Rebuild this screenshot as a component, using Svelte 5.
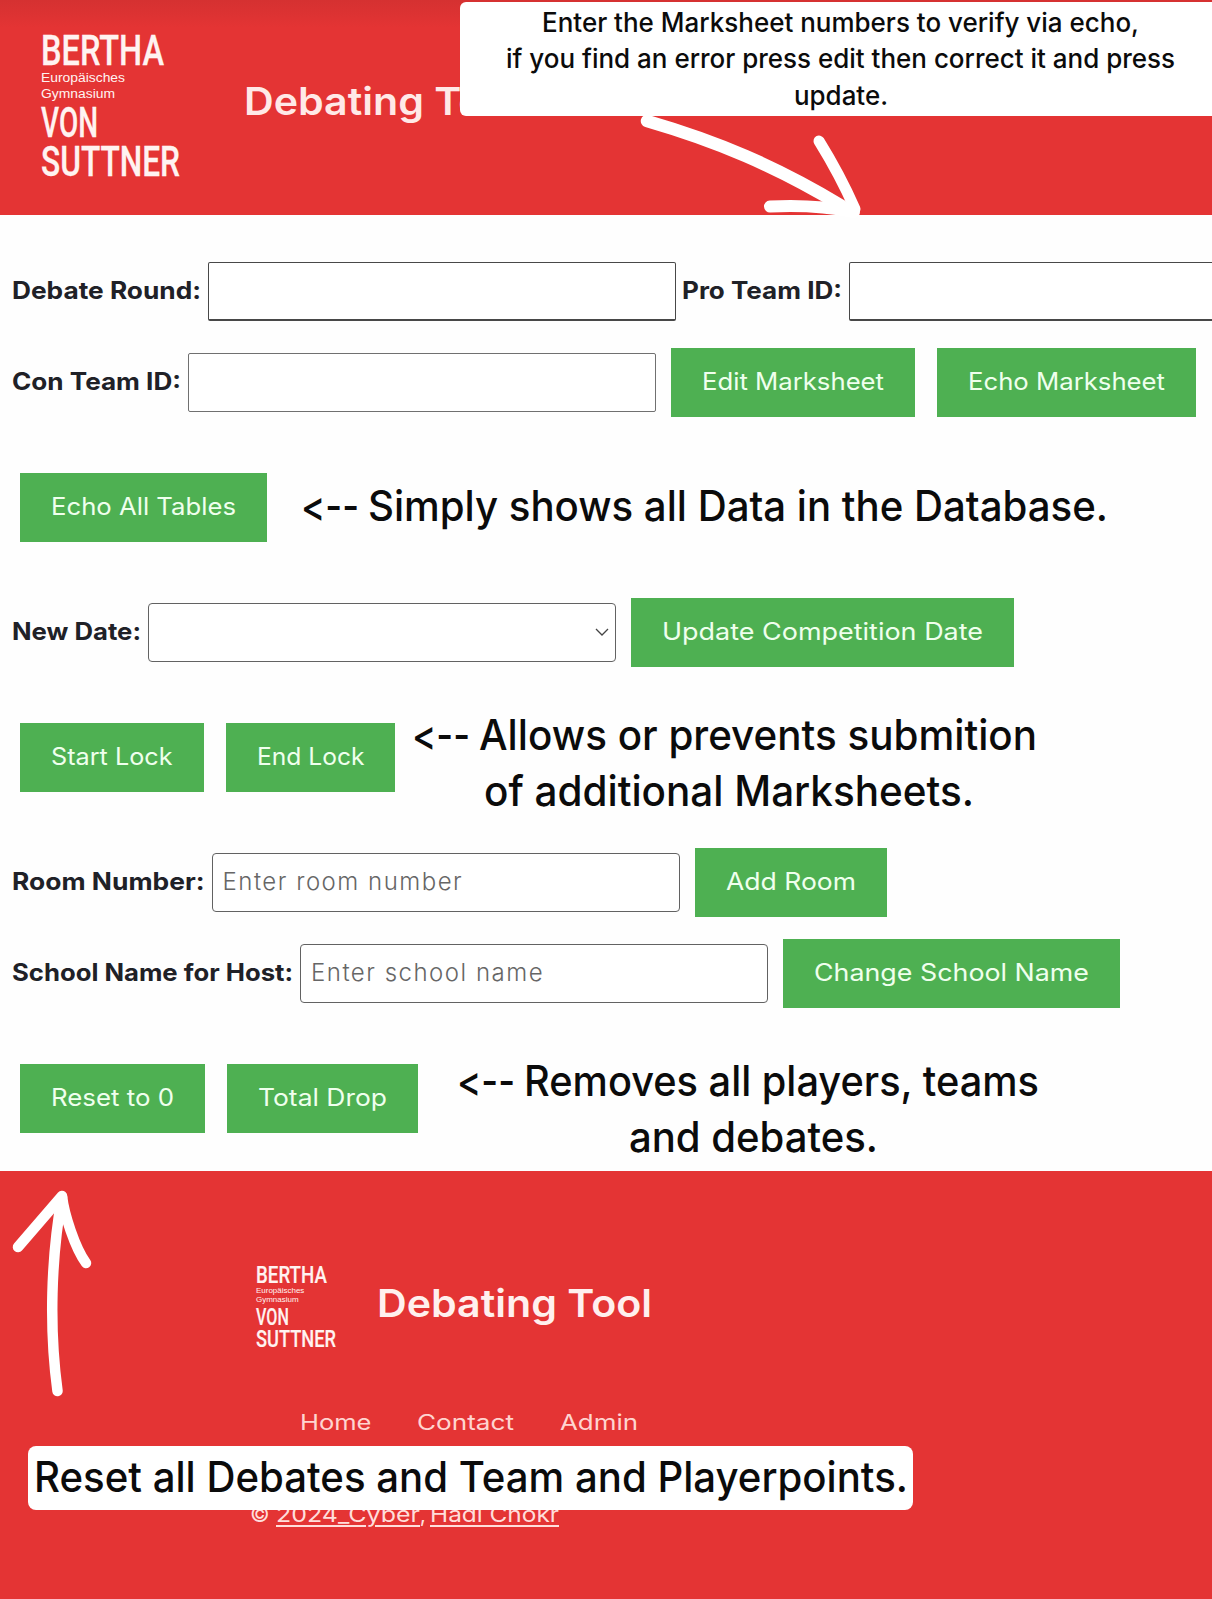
<script>
  // Stretches or condenses a line of text until it fills the given width.
  function fit(node, width) {
    const natural = node.getBoundingClientRect().width;
    node.style.transform = `scaleX(${width / natural})`;
    node.style.marginRight = `${width - natural}px`;
  }
</script>

{#snippet logo()}
  <svg class="logo" viewBox="0 0 140 144" role="img" aria-label="Bertha von Suttner">
    <g class="big">
      <text x="0" y="32" textLength="123" lengthAdjust="spacingAndGlyphs">BERTHA</text>
      <text x="0" y="104" textLength="57" lengthAdjust="spacingAndGlyphs">VON</text>
      <text x="0" y="143" textLength="139" lengthAdjust="spacingAndGlyphs">SUTTNER</text>
    </g>
    <g class="small">
      <text x="0" y="49" textLength="84" lengthAdjust="spacingAndGlyphs">Europäisches</text>
      <text x="0" y="64.5" textLength="74" lengthAdjust="spacingAndGlyphs">Gymnasium</text>
    </g>
  </svg>
{/snippet}

{#snippet button(text, width)}
  <button type="button"><span class="fit" use:fit={width}>{text}</span></button>
{/snippet}

{#snippet label(text, width, id)}
  <label for={id}><span class="fit" use:fit={width}>{text}</span></label>
{/snippet}

<div class="page">
  <header>
    {@render logo()}
    <h1><span class="fit" use:fit={275}>Debating Tool</span></h1>
  </header>

  <main>
    <div class="row first">
      {@render label('Debate Round:', 189, 'round')}
      <input id="round" class="square" />
      <span class="spacer"></span>
      {@render label('Pro Team ID:', 160, 'pro')}
      <input id="pro" class="square" />
    </div>
    <div class="row">
      {@render label('Con Team ID:', 169, 'con')}
      <input id="con" class="square light" />
      <div class="actions">
        {@render button('Edit Marksheet', 182)}
        {@render button('Echo Marksheet', 197)}
      </div>
    </div>
    <div class="row apart">
      <div class="actions start">{@render button('Echo All Tables', 185)}</div>
      <p class="note data">
        <span class="line"><span class="fit" use:fit={58}>&lt;--</span><span class="fit" use:fit={740}>Simply shows all Data in the Database.</span></span>
      </p>
    </div>
    <div class="row apart">
      {@render label('New Date:', 129, 'date')}
      <div class="select">
        <select id="date" aria-label="New Date"></select>
        <svg viewBox="0 0 14 8"><path d="M1 1l6 6 6-6" /></svg>
      </div>
      <div class="actions">{@render button('Update Competition Date', 321)}</div>
    </div>
    <div class="row apart">
      <div class="actions start">
        {@render button('Start Lock', 121.5)}
        {@render button('End Lock', 107.5)}
      </div>
      <p class="note lock">
        <span class="line"><span class="fit" use:fit={58}>&lt;--</span><span class="fit" use:fit={558}>Allows or prevents submition</span></span>
        <span class="line second"><span class="fit" use:fit={490}>of additional Marksheets.</span></span>
      </p>
    </div>
    <div class="row apart">
      {@render label('Room Number:', 192.5, 'room')}
      <input id="room" placeholder="Enter room number" />
      <div class="actions">{@render button('Add Room', 130)}</div>
    </div>
    <div class="row close">
      {@render label('School Name for Host:', 281, 'school')}
      <input id="school" placeholder="Enter school name" />
      <div class="actions">{@render button('Change School Name', 275)}</div>
    </div>
    <div class="row apart">
      <div class="actions start">
        {@render button('Reset to 0', 123)}
        {@render button('Total Drop', 129)}
      </div>
      <p class="note drop">
        <span class="line"><span class="fit" use:fit={58}>&lt;--</span><span class="fit" use:fit={515}>Removes all players, teams</span></span>
        <span class="line second"><span class="fit" use:fit={249}>and debates.</span></span>
      </p>
    </div>
  </main>

  <footer>
    <div class="brand">
      {@render logo()}
      <h2><span class="fit" use:fit={275}>Debating Tool</span></h2>
    </div>
    <nav>
      <a href="#home"><span class="fit" use:fit={71.5}>Home</span></a>
      <a href="#contact"><span class="fit" use:fit={97}>Contact</span></a>
      <a href="#admin"><span class="fit" use:fit={78}>Admin</span></a>
    </nav>
    <p class="copy">
      <span>©</span>
      <a href="#cyber"><span class="fit" use:fit={144}>2024_Cyber</span></a><span class="comma">,</span>
      <a href="#author"><span class="fit" use:fit={129}>Hadi Chokr</span></a>
    </p>
  </footer>

  <div class="callout top">
    <span class="fit" use:fit={597}>Enter the Marksheet numbers to verify via echo,</span>
    <span class="fit" use:fit={669}>if you find an error press edit then correct it and press</span>
    <span class="fit" use:fit={94}>update.</span>
  </div>
  <div class="callout bottom"><span class="fit" use:fit={874}>Reset all Debates and Team and Playerpoints.</span></div>

  <svg class="arrow down" viewBox="0 0 224 106">
    <path d="M11 11C80 31 140 56 206 96" stroke-width="12.5" />
    <path d="M183 31C196 52 208 74 219 99" stroke-width="11" />
    <path d="M134 96.500C162 95 188 96 218 102" stroke-width="12" />
  </svg>
  <svg class="arrow up" viewBox="0 0 84 210">
    <path d="M8 59L52 8C54 26 65 60 76 75" />
    <path d="M52 9C41 70 39 140 47.500 203" />
  </svg>
</div>

<style>
  :global(body) { margin: 0; background: #fefefe; }
  .page {
    position: relative;
    width: 1212px;
    height: 1599px;
    overflow: hidden;
    font-family: Inter, "Open Sans", sans-serif;
    font-size: 24px;
    color: #202127;
  }
  .fit { display: inline-block; white-space: pre; flex: none; transform-origin: left center; }
  h1, h2, p { margin: 0; }

  header {
    box-sizing: border-box;
    display: flex;
    align-items: flex-start;
    height: 215px;
    padding: 33px 0 0 41px;
    background: linear-gradient(#d53131, #e43434 28px);
  }
  .logo { display: block; flex: none; width: 140px; height: 144px; fill: #fff3f1; overflow: visible; }
  .logo .big { font: 500 43px Roboto, sans-serif; stroke: #fff3f1; stroke-width: 0.3; }
  .logo .small { font: 400 12.5px "Liberation Sans", sans-serif; }
  h1, h2 { font-weight: 600; font-size: 38.5px; line-height: 48px; color: #ffe9e7; }
  h1 { margin: 44px 0 0 62.5px; }

  main {
    box-sizing: border-box;
    height: 956px;
    padding-top: 41.7px;
  }
  .row { display: flex; align-items: center; height: 69px; margin-top: 22px; padding-left: 12px; }
  .row.first { margin-top: 0; }
  .row.apart { margin-top: 56px; }
  .row.close { margin-top: 21.9px; }
  label { flex: none; margin-right: 7px; line-height: 30px; font-weight: 700; }
  .spacer { flex: none; width: 6px; }

  input, select {
    box-sizing: border-box;
    flex: none;
    width: 468px;
    height: 59px;
    margin-top: 1px;
    padding: 0 10px 2px;
    border: 1px solid #626262;
    border-radius: 4px;
    background: #fff;
    font: 400 24px Inter, sans-serif;
    letter-spacing: 1.5px;
    appearance: none;
  }
  input.square { border-radius: 2px; border-color: #484848; border-bottom-width: 2px; }
  input.light { border-color: #707070; border-bottom-width: 1px; }
  input::placeholder { color: #666; opacity: 1; font-weight: 350; }
  .select { position: relative; flex: none; display: flex; }
  .select svg { position: absolute; right: 7px; top: 26px; width: 14px; height: 8px; fill: none; stroke: #444; stroke-width: 1.3; }

  .actions { display: flex; flex: none; gap: 22px; margin-left: 15px; }
  .actions.start { margin-left: 8px; }
  button {
    box-sizing: border-box;
    height: 69px;
    padding: 0 31px 1px;
    border: 0;
    background: #4eb052;
    color: #efffed;
    font: 400 24px Inter, sans-serif;
    white-space: nowrap;
  }

  .note {
    flex: none;
    font: 540 42px/56px Inter, sans-serif;
    /* keeps "<--" as three separate characters */
    font-feature-settings: "calt" 0, "liga" 0;
    color: #0b0b0b;
  }
  .line { display: flex; justify-content: center; gap: 9px; }
  .note.data { margin-left: 34px; margin-top: -3px; }
  .note.lock { margin-left: 17px; margin-top: 11px; }
  .note.lock .second { padding-left: 8px; }
  .note.drop { margin-left: 39px; margin-top: 21px; }
  .note.drop .second { padding-left: 10px; }

  footer { box-sizing: border-box; height: 428px; padding: 94px 0 0 256px; background: #e43434; }
  .brand { display: flex; align-items: flex-start; height: 84px; }
  footer .logo { width: 80.6px; height: 83px; }
  h2 { margin: 14px 0 0 40px; color: #fff0ee; }
  nav { display: flex; gap: 46px; margin: 59px 0 0 43.5px; font-size: 21.5px; line-height: 28px; }
  nav a { color: #ffd5d0; text-decoration: none; }
  .copy { display: flex; margin: 64px 0 0 -6px; font-size: 21.5px; line-height: 28px; color: #ffdedb; }
  .copy a { color: inherit; text-decoration: none; margin-left: 6px; }
  .copy .fit { text-decoration: underline; text-decoration-thickness: 2px; text-underline-offset: 3px; }
  .copy .comma { width: 4px; }

  .callout {
    position: absolute;
    box-sizing: border-box;
    display: flex;
    flex-direction: column;
    align-items: center;
    background: #fff;
    color: #0b0b0b;
    font-weight: 540;
  }
  .callout.top { left: 460px; top: 2px; width: 761px; height: 114px; padding-top: 2px; border-radius: 6px; font-size: 26.5px; line-height: 36.3px; }
  .callout.bottom { left: 28px; top: 1446px; width: 885px; height: 64px; border-radius: 8px; font-size: 42px; line-height: 62px; }

  .arrow { position: absolute; fill: none; stroke: #fff; stroke-width: 10.500; stroke-linecap: round; stroke-linejoin: round; }
  .arrow.down { left: 636px; top: 110px; width: 224px; height: 106px; overflow: visible; }
  .arrow.up { left: 10px; top: 1188px; width: 84px; height: 210px; overflow: visible; }
</style>
